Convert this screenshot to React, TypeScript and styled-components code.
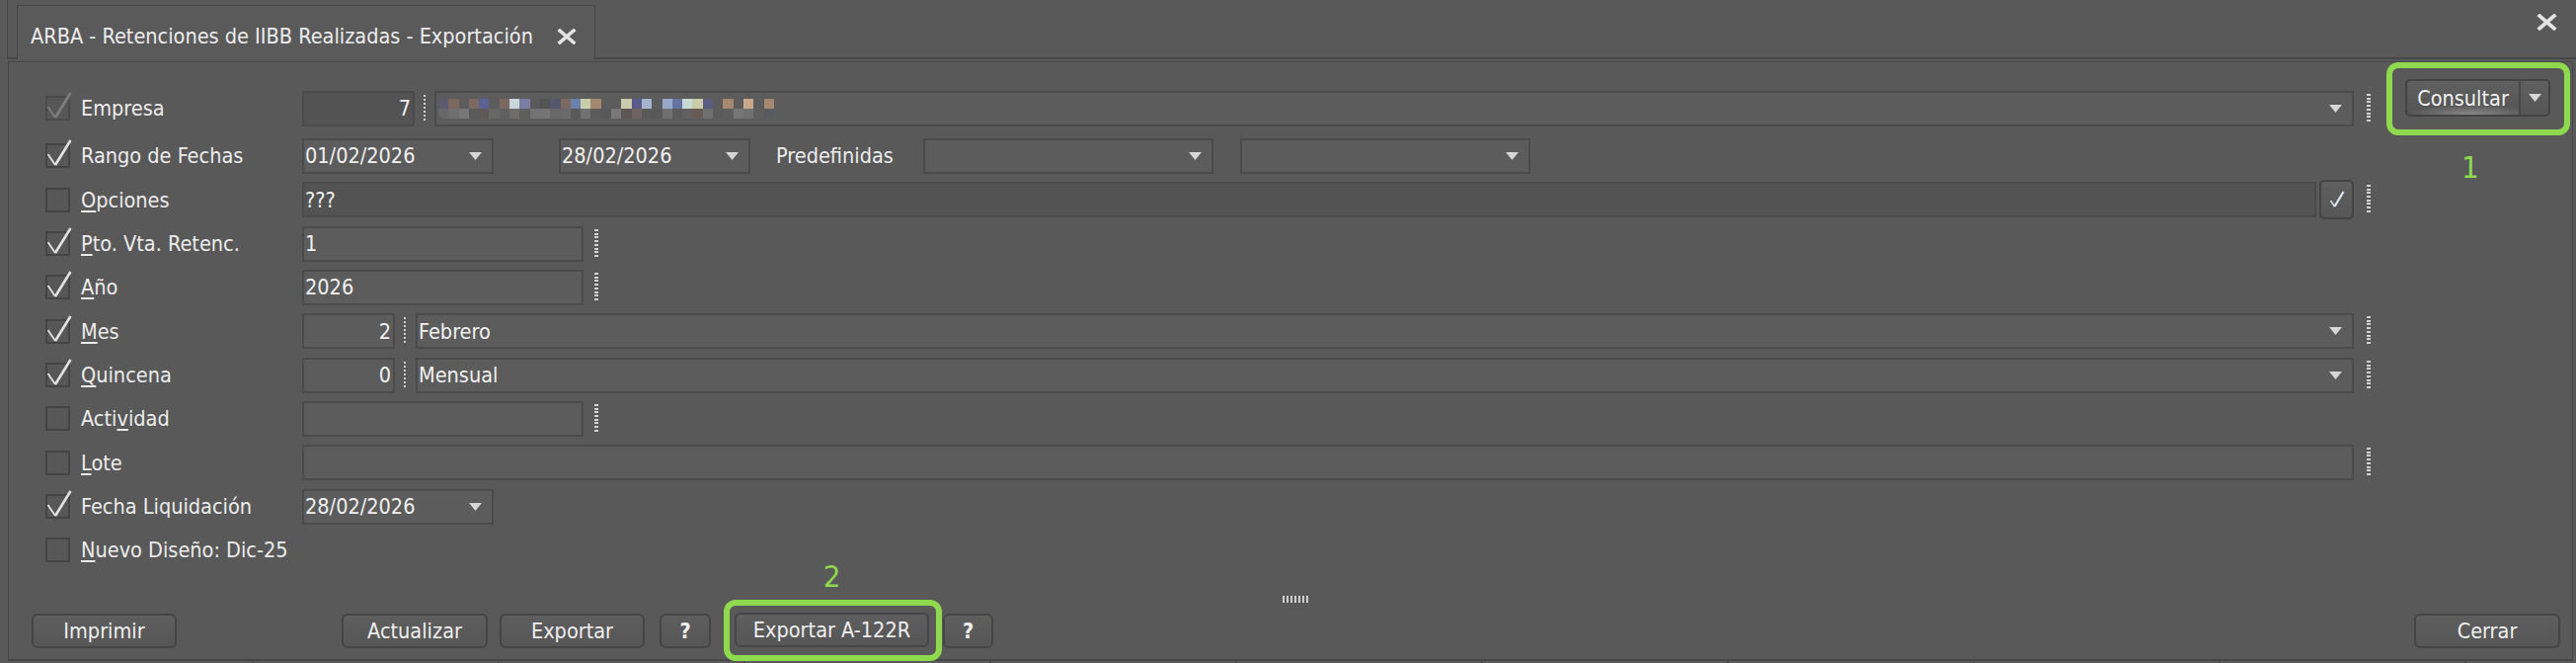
import styled, { createGlobalStyle } from "styled-components";

const GREEN = "#8fd94f";

const GlobalStyle = createGlobalStyle`
  html, body { margin: 0; padding: 0; }
  body {
    background: #595959;
    font-family: "DejaVu Sans Condensed", "DejaVu Sans", sans-serif;
    font-stretch: condensed;
    font-size: 21.5px;
    color: #ececec;
  }
`;

// pixelated (censored) company name
const MOSAIC_TOP = [
  "#5b5b6d", "#7b6860", "#5c5c5c", "#7b6860", "#5a6392", "#5c5c5c", "#7b6860", "#c9d5d9",
  "#7d7ca2", "#5a5a5a", "#545454", "#575770", "#7b6860", "#6a82ab", "#c9ccab", "#a6876f",
  "#5c5c5c", "#5c5c5c", "#c9ccab", "#595a89", "#a7b4cd", "#5c5c5c", "#97a9c9", "#6572a2",
  "#c9d8d1", "#c9ccab", "#5b5a80", "#5c5c5c", "#a6876f", "#5c5c5c", "#caa98a", "#5c5c5c",
  "#a6876f",
];
const MOSAIC_BOTTOM = [
  "#686868", "#6f6f6f", "#777777", "#5a5a5a", "#5e5856", "#676767", "#606060", "#6f6c6c",
  "#5d5d5d", "#747474", "#747474", "#686868", "#6a6a6a", "#5a5a5a", "#727272", "#5b5b5b",
  "#595959", "#787878", "#5d5656", "#6e6262", "#5a5a5a", "#595959", "#707070", "#5a5a5a",
  "#626060", "#645c55", "#6f6f6f", "#5b5b5b", "#5e5e5e", "#767676", "#707070", "#5e5e5e",
  "#5a5a62",
];

function Arrow() {
  return (
    <ArrowSvg width="13" height="8" viewBox="0 0 13 8">
      <polygon points="0,0 13,0 6.5,8" fill="#d6d6d6" />
    </ArrowSvg>
  );
}

function Check({ on, dim }: { on: boolean; dim?: boolean }) {
  return (
    <Box $dim={dim}>
      {on && (
        <CheckSvg viewBox="0 0 25 25" width="25" height="25">
          <path d="M2.5 11 L10 22" stroke={dim ? "#7e7e7e" : "#e2e2e2"} strokeWidth="1.8" fill="none" />
          <path d="M10 22 L25.5 -3" stroke={dim ? "#7e7e7e" : "#e2e2e2"} strokeWidth="2.6" fill="none" />
        </CheckSvg>
      )}
    </Box>
  );
}

function XIcon({ size }: { size: number }) {
  return (
    <svg width={size} height={size * 0.8} viewBox="0 0 20 16">
      <path d="M3 2 L17 14 M17 2 L3 14" stroke="#e4e4e4" strokeWidth="3.6" strokeLinecap="square" />
    </svg>
  );
}

export default function App() {
  return (
    <Window>
      <GlobalStyle />
      <TabStrip>
        <Tab>
          <span>ARBA - Retenciones de IIBB Realizadas - Exportación</span>
          <TabClose>
            <XIcon size={20} />
          </TabClose>
        </Tab>
        <WindowClose>
          <XIcon size={21} />
        </WindowClose>
      </TabStrip>

      <Panel>
        <Main>
          <Form>
            <Row $first>
              <Check on dim />
              <Label>Empresa</Label>
              <Fields>
                <Field $w={114} $right $dark>7</Field>
                <Dots />
                <Field $grow>
                  <Mosaic>
                    <MosaicRow>
                      {MOSAIC_TOP.map((c, i) => (
                        <Block key={i} $c={c} />
                      ))}
                    </MosaicRow>
                    <MosaicRow>
                      {MOSAIC_BOTTOM.map((c, i) => (
                        <Block key={i} $c={c} />
                      ))}
                    </MosaicRow>
                  </Mosaic>
                  <Arrow />
                </Field>
                <Grip />
              </Fields>
            </Row>

            <Row>
              <Check on />
              <Label>Rango de Fechas</Label>
              <Fields>
                <Field $w={194}>
                  01/02/2026
                  <Arrow />
                </Field>
                <Field $w={194} $ml={66}>
                  28/02/2026
                  <Arrow />
                </Field>
                <InlineLabel>Predefinidas</InlineLabel>
                <Field $w={294}>
                  <Arrow />
                </Field>
                <Field $w={294} $ml={27}>
                  <Arrow />
                </Field>
              </Fields>
            </Row>

            <Row>
              <Check on={false} />
              <Label>
                <Acc>O</Acc>pciones
              </Label>
              <Fields>
                <Field $grow $dark>???</Field>
                <CheckButton>
                  <svg width="16" height="18" viewBox="0 0 16 18">
                    <path d="M1.5 10 L5.5 16" stroke="#cfe0f0" strokeWidth="1.6" fill="none" />
                    <path d="M5.5 16 L14.5 1" stroke="#dce8f4" strokeWidth="2.2" fill="none" />
                  </svg>
                </CheckButton>
                <Grip />
              </Fields>
            </Row>

            <Row>
              <Check on />
              <Label>
                <Acc>P</Acc>to. Vta. Retenc.
              </Label>
              <Fields>
                <Field $w={285}>1</Field>
                <Grip $ml={11} />
              </Fields>
            </Row>

            <Row>
              <Check on />
              <Label>
                <Acc>A</Acc>ño
              </Label>
              <Fields>
                <Field $w={285}>2026</Field>
                <Grip $ml={11} />
              </Fields>
            </Row>

            <Row>
              <Check on />
              <Label>
                <Acc>M</Acc>es
              </Label>
              <Fields>
                <Field $w={94} $right>2</Field>
                <Dots $mr={10} />
                <Field $grow>
                  Febrero
                  <Arrow />
                </Field>
                <Grip />
              </Fields>
            </Row>

            <Row>
              <Check on />
              <Label>
                <Acc>Q</Acc>uincena
              </Label>
              <Fields>
                <Field $w={94} $right>0</Field>
                <Dots $mr={10} />
                <Field $grow>
                  Mensual
                  <Arrow />
                </Field>
                <Grip />
              </Fields>
            </Row>

            <Row>
              <Check on={false} />
              <Label>
                Acti<Acc>v</Acc>idad
              </Label>
              <Fields>
                <Field $w={285} />
                <Grip $ml={11} />
              </Fields>
            </Row>

            <Row>
              <Check on={false} />
              <Label>
                <Acc>L</Acc>ote
              </Label>
              <Fields>
                <Field $grow />
                <Grip />
              </Fields>
            </Row>

            <Row>
              <Check on />
              <Label>Fecha Liquidación</Label>
              <Fields>
                <Field $w={194}>
                  28/02/2026
                  <Arrow />
                </Field>
              </Fields>
            </Row>

            <Row>
              <Check on={false} />
              <Label $wide>
                <Acc>N</Acc>uevo Diseño: Dic-25
              </Label>
            </Row>
          </Form>

          <SideCol>
            <Highlight $pad="11px 14px 13px 13px">
              <SplitButton>
                <SplitMain>Consultar</SplitMain>
                <SplitArrow>
                  <Arrow />
                </SplitArrow>
              </SplitButton>
            </Highlight>
            <Marker $flow>1</Marker>
          </SideCol>
        </Main>

        <Splitter />

        <ButtonBar>
          <Button $w={147}>Imprimir</Button>
          <Button $w={148} $ml={167}>Actualizar</Button>
          <Button $w={147} $ml={12}>Exportar</Button>
          <Button $w={52} $ml={15} $bold>?</Button>
          <Highlight $pad="7px 7px 8px 5px" $ml={13}>
            <Marker>2</Marker>
            <Button $w={197}>Exportar A-122R</Button>
          </Highlight>
          <Button $w={51} $ml={1} $bold>?</Button>
          <Button $w={148} $ml="auto">Cerrar</Button>
        </ButtonBar>
      </Panel>
      <GridHeader />
    </Window>
  );
}

const Window = styled.div`
  width: 2609px;
  height: 671px;
  display: flex;
  flex-direction: column;
  overflow: hidden;
`;

const TabStrip = styled.div`
  height: 60px;
  margin-left: 7px;
  padding-left: 10px;
  display: flex;
  align-items: flex-end;
  box-shadow: inset 0 -2px 0 #474747, inset 1px 0 0 #474747;
  flex-shrink: 0;
`;

const Tab = styled.div`
  width: 586px;
  height: 55px;
  box-sizing: border-box;
  border: 1px solid #464646;
  border-bottom: none;
  background: #5a5a5a;
  display: flex;
  align-items: center;
  padding: 7px 0 0 13px;
  color: #ededed;
`;

const TabClose = styled.span`
  margin-left: 24px;
  display: flex;
`;

const WindowClose = styled.span`
  margin-left: auto;
  margin-right: 19px;
  align-self: flex-start;
  margin-top: 14px;
  display: flex;
`;

const Panel = styled.div`
  margin: 2px 3px 0 8px;
  height: 606px;
  box-sizing: border-box;
  border: 1px solid #474747;
  display: flex;
  flex-direction: column;
  flex-shrink: 0;
`;

const Main = styled.div`
  display: flex;
`;

const Form = styled.div`
  flex: 1;
  display: flex;
  flex-direction: column;
  padding-top: 24.8px;
`;

const Row = styled.div<{ $first?: boolean }>`
  height: 44.33px;
  display: flex;
  align-items: center;
  padding: 0 16px 0 37px;
  margin-bottom: ${(p) => (p.$first ? "3.7px" : "0")};
`;

const Box = styled.span<{ $dim?: boolean }>`
  width: 25px;
  height: 25px;
  box-sizing: border-box;
  border: 2px solid ${(p) => (p.$dim ? "#4c4c4c" : "#444444")};
  background: #575757;
  position: relative;
  flex-shrink: 0;
`;

const CheckSvg = styled.svg`
  position: absolute;
  left: -2px;
  top: -2px;
  overflow: visible;
`;

const Label = styled.span<{ $wide?: boolean }>`
  margin-left: 11px;
  width: ${(p) => (p.$wide ? "auto" : "224px")};
  white-space: nowrap;
  color: #ececec;
`;

const Acc = styled.span`
  text-decoration: underline;
  text-underline-offset: 3px;
  text-decoration-thickness: 1.5px;
`;

const Fields = styled.div`
  flex: 1;
  display: flex;
  align-items: center;
`;

const Field = styled.div<{ $w?: number; $grow?: boolean; $right?: boolean; $dark?: boolean; $ml?: number }>`
  height: 36px;
  box-sizing: border-box;
  ${(p) => (p.$grow ? "flex: 1;" : `width: ${p.$w}px;`)}
  ${(p) => (p.$ml ? `margin-left: ${p.$ml}px;` : "")}
  flex-shrink: 0;
  border: 2px solid #4b4b4b;
  background: ${(p) => (p.$dark ? "#535353" : "#5c5c5c")};
  display: flex;
  align-items: center;
  justify-content: ${(p) => (p.$right ? "flex-end" : "flex-start")};
  padding: 0 2px 0 1px;
  color: #f0f0f0;
  white-space: nowrap;
`;

const ArrowSvg = styled.svg`
  margin-left: auto;
  margin-right: 8px;
  flex-shrink: 0;
`;

const InlineLabel = styled.span`
  margin-left: 26px;
  width: 149px;
  flex-shrink: 0;
  color: #ececec;
`;

const Mosaic = styled.div`
  display: flex;
  flex-direction: column;
  margin-left: 1px;
  border-radius: 0 0 6px 6px;
  overflow: hidden;
`;

const MosaicRow = styled.div`
  display: flex;
`;

const Block = styled.span<{ $c: string }>`
  width: 10.3px;
  height: 10px;
  background: ${(p) => p.$c};
`;

const Dots = styled.span<{ $mr?: number }>`
  width: 2px;
  height: 28px;
  margin: 0 ${(p) => p.$mr ?? 9}px 0 9px;
  flex-shrink: 0;
  background: repeating-linear-gradient(to bottom, #cfcfcf 0 2px, transparent 2px 4px);
`;

const Grip = styled.span<{ $ml?: number }>`
  width: 4px;
  height: 30px;
  margin-left: ${(p) => p.$ml ?? 13}px;
  flex-shrink: 0;
  background: repeating-linear-gradient(to bottom, #d2d2d2 0 2px, transparent 2px 3.7px);
`;

const CheckButton = styled.span`
  width: 35px;
  height: 40px;
  margin-left: 3px;
  box-sizing: border-box;
  border: 2px solid #444;
  border-radius: 5px;
  background: linear-gradient(#5f5f5f, #575757);
  display: flex;
  align-items: center;
  justify-content: center;
  flex-shrink: 0;
`;

const SideCol = styled.div`
  width: 188px;
  display: flex;
  flex-direction: column;
  align-items: flex-start;
`;

const Highlight = styled.div<{ $pad: string; $ml?: number }>`
  position: relative;
  z-index: 2;
  display: flex;
  border: 6px solid ${GREEN};
  border-radius: 12px;
  padding: ${(p) => p.$pad};
  margin-left: ${(p) => p.$ml ?? 0}px;
  flex-shrink: 0;
`;

const Marker = styled.span<{ $flow?: boolean }>`
  color: ${GREEN};
  font-size: 31px;
  line-height: 1;
  ${(p) =>
    p.$flow
      ? "margin: 17px 0 0 76px;"
      : "position: absolute; left: 50%; bottom: 100%; transform: translateX(-55%); margin-bottom: 14px;"}
`;

const SplitButton = styled.div`
  height: 38px;
  width: 147px;
  box-sizing: border-box;
  border: 2px solid #434343;
  border-radius: 5px;
  display: flex;
  overflow: hidden;
  background: radial-gradient(ellipse 45% 30% at 45% 100%, #8a8a8a, transparent), linear-gradient(#5f5f5f, #545454);
`;

const SplitMain = styled.span`
  width: 113px;
  display: flex;
  align-items: center;
  justify-content: center;
  color: #f2f2f2;
  border-right: 2px solid #484848;
`;

const SplitArrow = styled.span`
  flex: 1;
  display: flex;
  align-items: center;
  justify-content: center;
  background: linear-gradient(#5f5f5f, #565656);
  & > svg { margin: 0; }
`;

const Splitter = styled.div`
  align-self: center;
  margin: 23.7px 0 0 10px;
  width: 27px;
  height: 7px;
  background: repeating-linear-gradient(to right, #cfcfcf 0 2px, transparent 2px 4px);
`;

const ButtonBar = styled.div`
  height: 35px;
  margin-top: 11px;
  display: flex;
  align-items: center;
  padding: 0 12px 0 23px;
`;

const Button = styled.div<{ $w: number; $ml?: number | "auto"; $bold?: boolean }>`
  width: ${(p) => p.$w}px;
  height: 35px;
  margin-left: ${(p) => (p.$ml === "auto" ? "auto" : `${p.$ml ?? 0}px`)};
  box-sizing: border-box;
  border: 2px solid #454545;
  border-radius: 6px;
  background: linear-gradient(#5e5e5e, #565656);
  display: flex;
  align-items: center;
  justify-content: center;
  color: #efefef;
  font-weight: ${(p) => (p.$bold ? 700 : 400)};
  flex-shrink: 0;
`;

const GridHeader = styled.div`
  flex: 1;
  margin: 0 3px 0 8px;
  border-top: 1px solid #454545;
  background: repeating-linear-gradient(to right, #5a5a5a 0 247px, #4a4a4a 247px 249px);
`;
